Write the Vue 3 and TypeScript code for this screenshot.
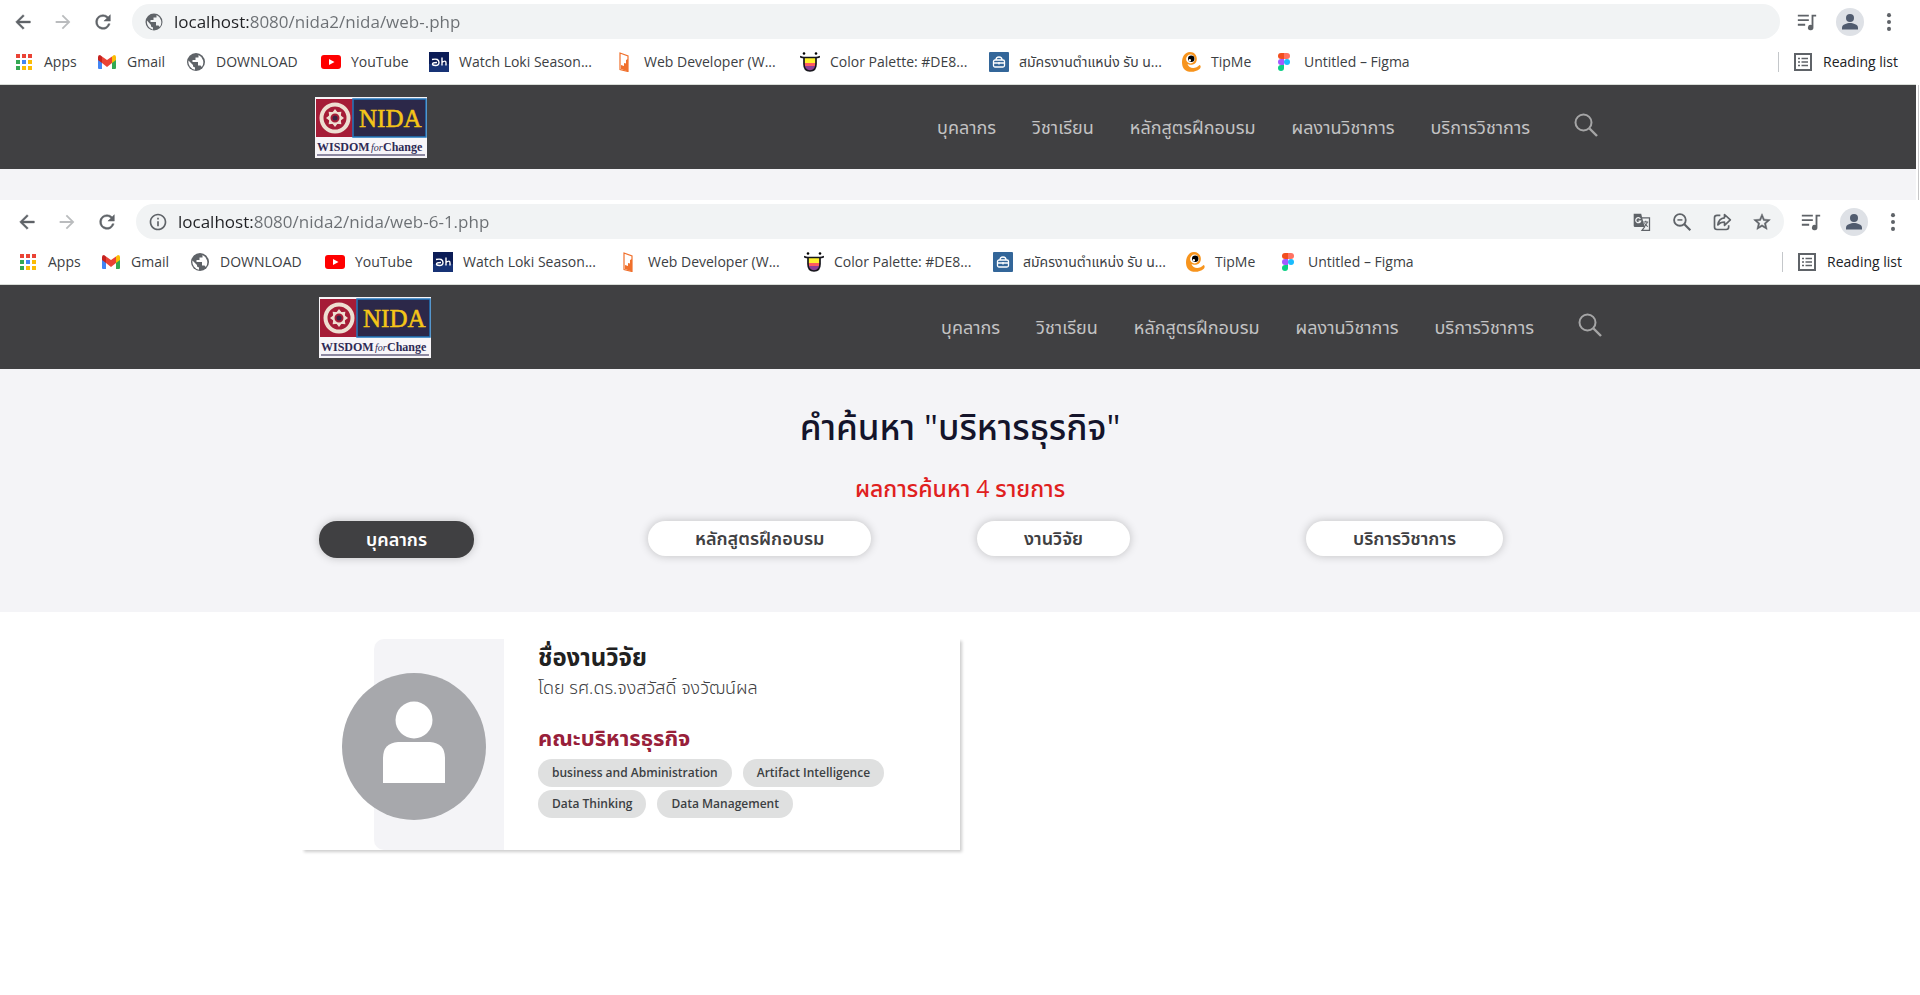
<script setup lang="ts">
import { ref } from 'vue'

interface BrowserWindow {
  id: string
  url: string
  clipped: boolean
}

interface Bookmark {
  label: string
  icon: string
}

const windows: BrowserWindow[] = [
  { id: 'back', url: 'localhost:8080/nida2/nida/web-.php', clipped: true },
  { id: 'front', url: 'localhost:8080/nida2/nida/web-6-1.php', clipped: false },
]

const bookmarks: Bookmark[] = [
  { label: 'Apps', icon: 'apps' },
  { label: 'Gmail', icon: 'gmail' },
  { label: 'DOWNLOAD', icon: 'globe' },
  { label: 'YouTube', icon: 'youtube' },
  { label: 'Watch Loki Season...', icon: 'dh' },
  { label: 'Web Developer (W...', icon: 'door' },
  { label: 'Color Palette: #DE8...', icon: 'palette' },
  { label: 'สมัครงานตำแหน่ง รับ น...', icon: 'job' },
  { label: 'TipMe', icon: 'tipme' },
  { label: 'Untitled – Figma', icon: 'figma' },
]

const appDots: string[] = [
  '#ea4335', '#ea4335', '#ea4335',
  '#34a853', '#4285f4', '#fbbc04',
  '#34a853', '#fbbc04', '#fbbc04',
]

const menu: string[] = ['บุคลากร', 'วิชาเรียน', 'หลักสูตรฝึกอบรม', 'ผลงานวิชาการ', 'บริการวิชาการ']
const tabs: string[] = ['บุคลากร', 'หลักสูตรฝึกอบรม', 'งานวิจัย', 'บริการวิชาการ']
const tags: string[] = ['business and Abministration', 'Artifact Intelligence', 'Data Thinking', 'Data Management']

const activeTab = ref(0)
const petals: number[] = [0, 45, 90, 135, 180, 225, 270, 315]
</script>

<template>
  <div class="screen">
    <section v-for="w in windows" :key="w.id" class="window" :class="{ clipped: w.clipped }">
      <div class="toolbar">
        <button class="tool" aria-label="Back">
          <svg viewBox="0 0 24 24"><path d="M20 11H7.830l5.590-5.590L12 4l-8 8 8 8 1.410-1.410L7.830 13H20v-2z" fill="#5f6368" stroke="#5f6368" stroke-width=".5" /></svg>
        </button>
        <button class="tool" aria-label="Forward">
          <svg viewBox="0 0 24 24"><path d="M12 4l-1.410 1.410L16.170 11H4v2h12.170l-5.580 5.590L12 20l8-8z" fill="#babcbe" /></svg>
        </button>
        <button class="tool" aria-label="Reload">
          <svg viewBox="0 0 24 24"><path d="M17.650 6.350A7.960 7.960 0 0 0 12 4a8 8 0 1 0 7.730 10h-2.080A6 6 0 1 1 12 6c1.660 0 3.140.69 4.220 1.780L13 11h7V4l-2.350 2.350z" fill="#5f6368" stroke="#5f6368" stroke-width=".5" /></svg>
        </button>
        <div class="omnibox">
          <svg v-if="w.clipped" class="site-icon" viewBox="0 0 20 20">
            <circle cx="10" cy="10" r="8.500" fill="#5f6368" />
            <path d="M3 8.500 7 13v1.500l2 1v2.200A8 8 0 0 1 3 8.500zM12.500 3v2.500h-3V8h-3v2H12v3.500h2.500l1.300 1.500A8 8 0 0 0 12.500 3z" fill="#f1f3f4" />
          </svg>
          <svg v-else class="site-icon" viewBox="0 0 24 24"><path d="M11 17h2v-6h-2v6zm1-15C6.480 2 2 6.480 2 12s4.480 10 10 10 10-4.480 10-10S17.520 2 12 2zm0 18c-4.410 0-8-3.590-8-8s3.590-8 8-8 8 3.590 8 8-3.590 8-8 8zM11 9h2V7h-2v2z" fill="#5f6368" /></svg>
          <input class="url" type="text" aria-label="Address" :value="w.url" />
          <div v-if="!w.clipped" class="omni-actions">
            <button class="tool" aria-label="Translate">
              <svg viewBox="0 0 24 24"><path d="M9 7h12v15H12l3-4z" fill="none" stroke="#5f6368" stroke-width="1.500" /><path d="M2 2h9l4 16H3.500A1.500 1.500 0 0 1 2 16.500z" fill="#5f6368" /><path d="M10 8.200A3 3 0 1 0 10.300 11H7.800" fill="none" stroke="#f1f3f4" stroke-width="1.500" /><path d="M13.500 12h6M16.500 10.500V12M18.500 12c-.5 2.500-2 4-3.500 5.500M15 13.500c1 1.700 2 2.700 4 4" fill="none" stroke="#5f6368" stroke-width="1.300" /></svg>
            </button>
            <button class="tool" aria-label="Zoom">
              <svg viewBox="0 0 24 24"><circle cx="9.500" cy="9.500" r="7" fill="none" stroke="#5f6368" stroke-width="2.200" /><path d="M14.500 14.500 22 22" stroke="#5f6368" stroke-width="2.600" /><path d="M6.500 9.500h6" stroke="#5f6368" stroke-width="1.800" /></svg>
            </button>
            <button class="tool" aria-label="Share">
              <svg viewBox="0 0 24 24"><path d="M10 4H6a3 3 0 0 0-3 3v11a3 3 0 0 0 3 3h11a3 3 0 0 0 3-3v-2" fill="none" stroke="#5f6368" stroke-width="2" /><path d="M15 3l7 6.500-7 6.500v-4c-3.500 0-6 1-8 3.500C7.600 11 10 7.500 15 7z" fill="none" stroke="#5f6368" stroke-width="2" stroke-linejoin="round" /></svg>
            </button>
            <button class="tool" aria-label="Bookmark this page">
              <svg viewBox="0 0 24 24"><path d="M22 9.240l-7.190-.62L12 2 9.190 8.630 2 9.240l5.460 4.730L5.820 21 12 17.270 18.180 21l-1.630-7.030L22 9.240zM12 15.400l-3.760 2.270 1-4.280-3.320-2.880 4.380-.38L12 6.100l1.710 4.040 4.380.38-3.320 2.880 1 4.280L12 15.400z" fill="#5f6368" stroke="#5f6368" stroke-width=".6" /></svg>
            </button>
          </div>
        </div>
        <button class="tool" aria-label="Media controls">
          <svg viewBox="0 0 24 24"><path d="M2 5h12M2 10h12M2 15h8" stroke="#5f6368" stroke-width="2" /><path d="M22 4h-5v11.200a3 3 0 1 0 2 2.800V6h3z" fill="#5f6368" /></svg>
        </button>
        <button class="tool profile" aria-label="Profile">
          <svg viewBox="0 0 28 28"><circle cx="14" cy="14" r="14" fill="#dee1e6" /><circle cx="14" cy="10" r="4" fill="#515c6f" /><path d="M6 21.500v-2c0-3 5-4.500 8-4.500s8 1.500 8 4.500v2z" fill="#515c6f" /></svg>
        </button>
        <button class="tool" aria-label="Menu">
          <svg viewBox="0 0 24 24" fill="#5f6368"><circle cx="12" cy="4.500" r="2.200" /><circle cx="12" cy="12" r="2.200" /><circle cx="12" cy="19.500" r="2.200" /></svg>
        </button>
      </div>

      <div class="bookmarks">
        <a v-for="b in bookmarks" :key="b.label" href="#" class="bookmark">
          <svg class="fav" viewBox="0 0 20 20">
            <template v-if="b.icon === 'apps'">
              <rect v-for="(c, i) in appDots" :key="i" :x="2 + (i % 3) * 6" :y="2 + Math.floor(i / 3) * 6" width="4" height="4" :fill="c" />
            </template>
            <template v-else-if="b.icon === 'gmail'">
              <path d="M1 5v11a1 1 0 0 0 1 1h3V8z" fill="#4285f4" />
              <path d="M19 5v11a1 1 0 0 1-1 1h-3V8z" fill="#34a853" />
              <path d="M15 4.500 17 3q2 0 2 2v3l-4 3z" fill="#fbbc04" />
              <path d="M5 4.500 3 3q-2 0-2 2v3l4 3z" fill="#c5221f" />
              <path d="M5 4.500 10 8l5-3.500V11l-5 4-5-4z" fill="#ea4335" />
            </template>
            <template v-else-if="b.icon === 'globe'">
              <circle cx="10" cy="10" r="9" fill="#5f6368" />
              <path d="M2.500 8.500 7 13v1.500l2 1v2.200A8 8 0 0 1 2.500 8.500zM12.500 3v2.500h-3V8h-3v2H12v3.500h2.500l1.300 1.500A8 8 0 0 0 12.500 3z" fill="#fff" />
            </template>
            <template v-else-if="b.icon === 'youtube'">
              <rect y="3" width="20" height="14" rx="3" fill="#f00" />
              <path d="M8 7v6l5.500-3z" fill="#fff" />
            </template>
            <template v-else-if="b.icon === 'dh'">
              <rect width="20" height="20" fill="#0b1c56" />
              <rect y="12" width="20" height="8" fill="#173275" />
              <path d="M3 7.500q7-1.500 7 3 0 3-3.500 3-3 0-3-1.500T8 10.500M13 5.500v8M13 10.500q4-3 4 .5v2.500" fill="none" stroke="#fff" stroke-width="1.400" />
            </template>
            <template v-else-if="b.icon === 'door'">
              <path d="M6 1l8 3v15.500l-8-2z" fill="none" stroke="#f0702c" stroke-width="1.200" />
              <path d="M14 7v12.500L7 17v-4l3 1v-3l2 .5V8z" fill="#f0702c" />
            </template>
            <template v-else-if="b.icon === 'palette'">
              <path d="M4 5h12v7q0 7-6 7t-6-7z" fill="#fff12e" />
              <path d="M4 11h12v3H4z" fill="#ff5a5f" />
              <path d="M4.500 14h11q-1 5-5.500 5t-5.500-5z" fill="#8d3f97" />
              <path d="M0 4.500q2 1 4 1v6.500q0 7 6 7t6-7V5.500q2 0 4-1M4 5.500h12" fill="none" stroke="#16161d" stroke-width="1.700" />
              <circle cx="4" cy="1.500" r="1.300" /><circle cx="16" cy="1.500" r="1.300" />
            </template>
            <template v-else-if="b.icon === 'job'">
              <rect width="20" height="20" rx="1" fill="#336699" />
              <path d="M7 8q0-3 3-3t3 3" fill="none" stroke="#fff" stroke-width="1.300" />
              <rect x="4.500" y="8" width="11" height="7" rx="1.500" fill="none" stroke="#fff" stroke-width="1.300" />
              <path d="M4.500 11h11M10 10v2.500" stroke="#fff" stroke-width="1.300" />
            </template>
            <template v-else-if="b.icon === 'tipme'">
              <path d="M18.500 13c1 0 2 2.500 0 4-4 3.500-12 4-15.500 0C-1 12 1 0 9 0c8 0 9 11 3 12.500-3 .8-4 0-5.500-.5C8 17 15 17 18.500 13z" fill="#f7941d" />
              <circle cx="9.500" cy="7" r="4.400" fill="#fff" /><circle cx="10.200" cy="6.800" r="3.200" /><circle cx="8.800" cy="8.200" r="1.200" fill="#fff" />
            </template>
            <template v-else>
              <path d="M10 1H7a3 3 0 0 0 0 6h3z" fill="#f24e1e" /><path d="M10 1h3a3 3 0 0 1 0 6h-3z" fill="#ff7262" />
              <path d="M10 7H7a3 3 0 0 0 0 6h3z" fill="#a259ff" /><circle cx="13" cy="10" r="3" fill="#1abcfe" />
              <path d="M10 13H7a3 3 0 1 0 3 3z" fill="#0acf83" />
            </template>
          </svg>
          <span>{{ b.label }}</span>
        </a>
        <button class="reading">
          <svg class="fav" viewBox="0 0 20 20"><rect x="2" y="2" width="16" height="16" fill="none" stroke="#5f6368" stroke-width="2" /><path d="M5 6.500h2M5 10h2M5 13.500h2M8.500 6.500H15M8.500 10H15M8.500 13.500H15" stroke="#5f6368" stroke-width="1.600" /></svg>
          <span>Reading list</span>
        </button>
      </div>

      <header class="site-header">
        <div class="container header-row">
          <a href="#" class="logo" aria-label="NIDA">
            <svg viewBox="0 0 112 61">
              <rect width="112" height="61" fill="#f7f5f8" />
              <rect x="1" y="2" width="37" height="38" fill="#a51c37" />
              <rect x="38" y="2" width="73" height="38" fill="#2c2849" stroke="#2277bd" stroke-width="1.500" />
              <circle cx="20" cy="21" r="13.500" fill="none" stroke="#eedfd2" stroke-width="4" />
              <g fill="#eedfd2">
                <path v-for="p in petals" :key="p" d="M20 12l3 4h-6z" :transform="`rotate(${p} 20 21)`" />
              </g>
              <circle cx="20" cy="21" r="5.500" fill="#a51c37" stroke="#eedfd2" stroke-width="2" />
              <circle cx="20" cy="21" r="2.500" fill="#3a2445" />
              <text x="44" y="30" class="logo-name">NIDA</text>
              <text x="2" y="54" class="logo-line">WISDOM</text>
              <text x="56" y="54" class="logo-for">for</text>
              <text x="68" y="54" class="logo-line">Change</text>
              <path d="M2 58h108" stroke="#6a6585" stroke-width="1.500" />
            </svg>
          </a>
          <nav class="menu">
            <a v-for="m in menu" :key="m" href="#">{{ m }}</a>
            <button class="search" aria-label="Search">
              <svg viewBox="0 0 24 24"><circle cx="9.500" cy="9.500" r="8" fill="none" stroke="#a5a5a6" stroke-width="2" /><path d="M15.500 15.500 23 23" stroke="#a5a5a6" stroke-width="2.400" /></svg>
            </button>
          </nav>
        </div>
      </header>
      <div v-if="w.clipped" class="sliver"></div>
    </section>

    <main>
      <section class="hero">
        <h1>คำค้นหา "บริหารธุรกิจ"</h1>
        <p class="count">ผลการค้นหา 4 รายการ</p>
        <div class="tabs">
          <div v-for="(t, i) in tabs" :key="t" class="tab-cell">
            <button class="tab" :class="{ active: i === activeTab }" @click="activeTab = i">{{ t }}</button>
          </div>
        </div>
      </section>

      <section class="results">
        <article class="card">
          <div class="photo">
            <svg viewBox="0 0 144 147"><ellipse cx="72" cy="73.500" rx="72" ry="73.500" fill="#a7a8ac" /><circle cx="72" cy="47" r="18.500" fill="#fff" /><path d="M41 110V85q0-15 15-16h32q15 1 15 16v25z" fill="#fff" /></svg>
          </div>
          <div class="info">
            <h2>ชื่องานวิจัย</h2>
            <p class="author">โดย รศ.ดร.จงสวัสดิ์ จงวัฒน์ผล</p>
            <p class="faculty">คณะบริหารธุรกิจ</p>
            <ul class="tags">
              <li v-for="t in tags" :key="t">{{ t }}</li>
            </ul>
          </div>
        </article>
      </section>
    </main>
  </div>
</template>

<style>
body {
  margin: 0;
  background: #fff;
}
</style>

<style scoped>
.screen {
  min-height: 100vh;
  overflow: hidden;
  font-family: "Open Sans", "Noto Sans Thai", "Noto Sans", "Liberation Sans", sans-serif;
  color: #3c4043;
}
button {
  padding: 0;
  border: 0;
  background: none;
  font: inherit;
  color: inherit;
  cursor: pointer;
}
svg {
  display: block;
}
a {
  color: inherit;
  text-decoration: none;
}
.window.clipped {
  position: relative;
  margin: 0 4px 0 -4px;
}
.window.clipped::after {
  content: "";
  position: absolute;
  top: 85px;
  right: -3px;
  bottom: 0;
  width: 1px;
  background: #c6c6c8;
}
.toolbar {
  display: flex;
  align-items: center;
  height: 43px;
  padding: 0 16px;
}
.tool {
  flex: none;
  width: 22px;
  height: 22px;
  margin-right: 18px;
}
.tool:last-child {
  margin-right: 0;
}
.profile {
  width: 28px;
  height: 28px;
  margin-right: 14px;
}
.omnibox {
  display: flex;
  flex: 1;
  align-items: center;
  height: 35px;
  margin-right: 16px;
  padding: 0 12px;
  border-radius: 18px;
  background: #f1f3f4;
}
.site-icon {
  width: 20px;
  height: 20px;
  margin-right: 10px;
}
.url {
  flex: 1;
  min-width: 0;
  padding: 0;
  border: 0;
  outline: 0;
  font: 17px/24px "Open Sans", "Noto Sans", sans-serif;
  background: linear-gradient(90deg, #202124 76px, #6b6f73 76px);
  background-clip: text;
  -webkit-text-fill-color: transparent;
}
.omni-actions {
  display: flex;
}
.omni-actions .tool {
  width: 20px;
  height: 20px;
  margin-right: 20px;
}
.omni-actions .tool:last-child {
  margin-right: 0;
}
.bookmarks {
  display: grid;
  grid-template-columns: 83px 89px 135px 108px 185px 186px 189px 192px 93px 1fr auto;
  align-items: center;
  height: 38px;
  padding: 0 18px 3px;
  border-bottom: 1px solid #d9ddd8;
  font-size: 14px;
  line-height: 20px;
  white-space: nowrap;
}
.bookmark,
.reading {
  display: flex;
  align-items: center;
  gap: 10px;
}
.fav {
  flex: none;
  width: 20px;
  height: 20px;
}
.reading {
  padding-left: 14px;
  border-left: 1px solid #c4c7ca;
  color: #202124;
}
.container {
  box-sizing: border-box;
  max-width: 1316px;
  margin: 0 auto;
  padding: 0 16px 0 17px;
}
.site-header {
  background: #404042;
}
.header-row {
  display: flex;
  align-items: center;
  justify-content: space-between;
  height: 84px;
}
.logo svg {
  width: 112px;
  height: 61px;
}
.logo-name {
  font: 25px "Liberation Serif", serif;
  fill: #f5c518;
  stroke: #f5c518;
  stroke-width: 0.5px;
}
.logo-line {
  font: bold 12px "Liberation Serif", serif;
  fill: #2e2a55;
}
.logo-for {
  font: italic 10px "Liberation Serif", serif;
  fill: #2e2a55;
}
.menu {
  display: flex;
  align-items: center;
  gap: 36px;
  font-size: 18px;
  line-height: 24px;
  color: #c3c3c4;
}
.search {
  width: 24px;
  height: 24px;
  margin: 0 0 4px 8px;
}
.sliver {
  height: 31px;
  background: #f4f4f7;
}
.hero {
  padding: 32px 0 54px;
  background: #f4f4f7;
  text-align: center;
}
h1 {
  margin: 0;
  font-size: 35px;
  line-height: 52px;
  font-weight: 500;
  color: #14142b;
}
.count {
  margin: 19px 0 17px;
  font-size: 23px;
  line-height: 32px;
  font-weight: 500;
  color: #e02020;
}
.tabs,
.results {
  display: grid;
  max-width: 1316px;
  margin: 0 auto;
}
.tabs {
  grid-template-columns: repeat(4, 1fr);
  align-items: start;
  text-align: left;
}
.tab-cell {
  padding-left: 17px;
}
.tab {
  padding: 0 47px;
  border-radius: 18px;
  background: #fff;
  box-shadow: 0 0 10px rgba(0, 0, 0, 0.22);
  font-size: 18px;
  line-height: 35px;
  font-weight: 600;
  color: #404042;
}
.tab.active {
  background: #404042;
  color: #fff;
  line-height: 37px;
}
.results {
  grid-template-columns: repeat(2, 1fr);
  padding-top: 27px;
}
.card {
  display: flex;
  min-height: 211px;
  box-shadow: 2px 2px 3px rgba(0, 0, 0, 0.2);
  clip-path: inset(0 -8px -8px 0);
}
.photo {
  display: flex;
  flex: none;
  align-items: center;
  justify-content: flex-end;
  box-sizing: border-box;
  width: 130px;
  margin-left: 72px;
  padding: 3px 18px 0 0;
  border-radius: 10px 0 0 10px;
  background: #f4f4f7;
}
.photo svg {
  flex: none;
  width: 144px;
  height: 147px;
}
.info {
  flex: 1;
  padding-left: 34px;
}
h2 {
  margin: 0;
  font-size: 24px;
  line-height: 36px;
  font-weight: 700;
  color: #212121;
}
.author {
  margin: 0;
  font-size: 18px;
  line-height: 24px;
  font-weight: 300;
  color: #404042;
}
.faculty {
  margin: 22px 0 6px;
  font-size: 22px;
  line-height: 32px;
  font-weight: 700;
  color: #98203a;
}
.tags {
  display: flex;
  flex-wrap: wrap;
  gap: 3px 11px;
  margin: 0;
  padding: 0 60px 0 0;
  list-style: none;
}
.tags li {
  padding: 0 14px;
  border-radius: 14px;
  background: #dfe0e0;
  font-size: 12px;
  line-height: 28px;
  font-weight: 600;
}
</style>
